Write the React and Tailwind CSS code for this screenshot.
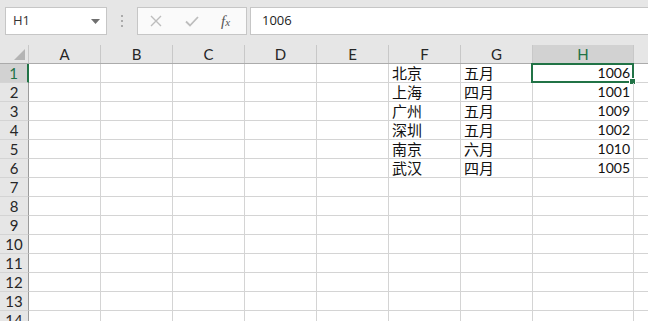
import { Fragment } from 'react'

const cols = ['A', 'B', 'C', 'D', 'E', 'F', 'G', 'H']

const data = [
  ['北京', '五月', '1006'],
  ['上海', '四月', '1001'],
  ['广州', '五月', '1009'],
  ['深圳', '五月', '1002'],
  ['南京', '六月', '1010'],
  ['武汉', '四月', '1005'],
]

const cellFont = { fontFamily: 'Lato, "Noto Sans CJK SC", sans-serif' }

export default function App() {
  return (
    <div className="w-[648px] h-[321px] overflow-hidden bg-white select-none" style={cellFont}>
      <FormulaBar />
      <ColumnHeader />
      {Array.from({ length: 14 }, (_, i) => (
        <Row key={i} index={i} values={data[i]} />
      ))}
    </div>
  )
}

function FormulaBar() {
  return (
    <div
      className="h-[45px] bg-[#e6e6e6] flex items-start pt-[7px] pl-[5px]"
      style={{ fontFamily: '"Open Sans", sans-serif' }}
    >
      <div className="w-[102px] h-[28px] bg-white border border-[#c6c6c6] flex items-center justify-between pl-[7px] pr-[6px]">
        <span className="text-[13px] text-[#333]">H1</span>
        <svg width="9" height="5" viewBox="0 0 9 5">
          <path d="M0 0 L9 0 L4.5 5 Z" fill="#6f6f6f" />
        </svg>
      </div>
      <div className="w-[30px] h-[28px] flex flex-col items-center justify-center gap-[3px]">
        <span className="w-[2px] h-[2px] bg-[#ababab]" />
        <span className="w-[2px] h-[2px] bg-[#ababab]" />
        <span className="w-[2px] h-[2px] bg-[#ababab]" />
      </div>
      <div className="w-[110px] h-[28px] bg-[#fafafa] border border-[#c6c6c6] flex items-center">
        <svg className="ml-[12px]" width="12" height="12" viewBox="0 0 12 12">
          <path d="M1 1 L11 11 M11 1 L1 11" stroke="#bdbdbd" strokeWidth="1.4" />
        </svg>
        <svg className="ml-[23px]" width="14" height="11" viewBox="0 0 14 11">
          <path d="M1 5.5 L5 9.5 L13 1" stroke="#bdbdbd" strokeWidth="1.8" fill="none" />
        </svg>
        <span
          className="ml-[22px] text-[15px] italic text-[#555]"
          style={{ fontFamily: '"Liberation Serif", serif' }}
        >
          f<span className="text-[11px]">x</span>
        </span>
      </div>
      <div className="flex-1 ml-[3px] h-[28px] bg-white border border-[#c6c6c6] border-r-0 flex items-center pl-[11px]">
        <span className="text-[13px] text-[#222]">1006</span>
      </div>
    </div>
  )
}

function ColumnHeader() {
  return (
    <div className="flex h-[19px] bg-[#e6e6e6] border-b border-[#ababab]">
      <div className="w-[29px] shrink-0 border-r border-[#c8c8c8] relative">
        <svg className="absolute right-[3px] bottom-[3px]" width="11" height="11" viewBox="0 0 11 11">
          <path d="M11 0 L11 11 L0 11 Z" fill="#b4b4b4" />
        </svg>
      </div>
      {cols.map((c) => (
        <div
          key={c}
          className={
            c === 'H'
              ? 'w-[101px] shrink-0 border-r border-[#c8c8c8] bg-[#d2d2d2] text-[#217346] flex items-end justify-center text-[15px] leading-[18px]'
              : 'w-[72px] shrink-0 border-r border-[#c8c8c8] text-[#262626] flex items-end justify-center text-[15px] leading-[18px]'
          }
        >
          {c}
        </div>
      ))}
      <div className="flex-1" />
    </div>
  )
}

function Row({ index, values }) {
  const active = index === 0
  return (
    <div className="flex h-[19px]">
      <div
        className={
          active
            ? 'w-[29px] shrink-0 bg-[#d2d2d2] border-r-2 border-r-[#217346] border-b border-b-[#d4d4d4] text-[#217346] flex items-end justify-center text-[15px] leading-[18px]'
            : 'w-[29px] shrink-0 bg-[#e6e6e6] border-r border-r-[#9b9b9b] border-b border-b-[#d4d4d4] text-[#262626] flex items-end justify-center text-[15px] leading-[18px]'
        }
      >
        {index + 1}
      </div>
      {cols.map((c) => {
        let content = null
        if (values && c === 'F') content = values[0]
        if (values && c === 'G') content = values[1]
        if (values && c === 'H') content = values[2]
        return (
          <div
            key={c}
            className={
              c === 'H'
                ? 'relative w-[101px] shrink-0 border-r border-b border-[#d4d4d4] flex items-end justify-end pr-[3px] text-[14px] leading-[18px] text-[#111]'
                : 'relative w-[72px] shrink-0 border-r border-b border-[#d4d4d4] flex items-end pl-[3px] text-[15px] leading-[18px] text-[#111]'
            }
          >
            {content}
            {active && c === 'H' && (
              <Fragment>
                <div className="absolute -left-[2px] -top-[1px] -right-[1px] -bottom-[1px] border-2 border-[#217346]" />
                <div className="absolute -right-[3px] -bottom-[3px] w-[5px] h-[5px] bg-[#217346] border border-white box-content" />
              </Fragment>
            )}
          </div>
        )
      })}
      <div className="flex-1 border-b border-[#d4d4d4]" />
    </div>
  )
}
